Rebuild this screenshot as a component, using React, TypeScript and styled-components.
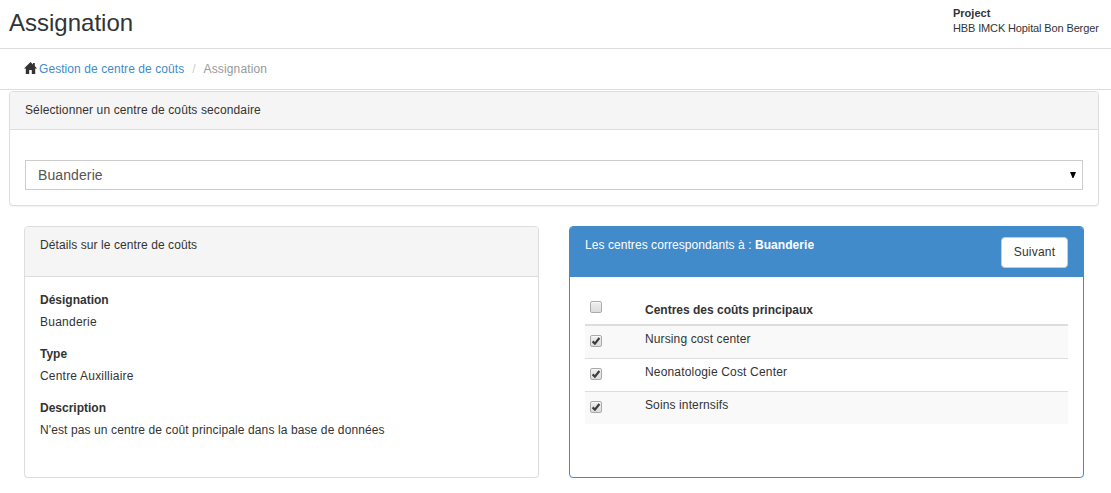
import React from "react";
import styled, { createGlobalStyle, css } from "styled-components";

const GlobalStyle = createGlobalStyle`
  *, *::before, *::after { box-sizing: border-box; }
  body {
    margin: 0;
    background: #fff;
    color: #333;
    font-family: "Liberation Sans", Arial, sans-serif;
    font-size: 12px;
    line-height: 17px;
  }
`;

const Text = styled.span<{ $spacing: number }>`
  letter-spacing: ${(p) => p.$spacing}px;
  white-space: nowrap;
`;

const Header = styled.header`
  display: flex;
  justify-content: space-between;
  height: 49px;
  padding: 0 12px 0 9px;
  border-bottom: 1px solid #ddd;
`;

const Title = styled.h1`
  margin: 0;
  padding-top: 9px;
  font-size: 24px;
  font-weight: 400;
  line-height: 27px;
`;

const Project = styled.div`
  width: 146px;
  padding-top: 6px;
  font-size: 11px;
  line-height: 15px;
  white-space: nowrap;
`;

const ProjectLabel = styled.strong`
  display: block;
`;

const Breadcrumb = styled.nav`
  display: flex;
  align-items: center;
  height: 41px;
  padding: 0 24px;
  border-bottom: 1px solid #ddd;
`;

const HomeIcon = styled.svg`
  width: 13px;
  height: 12px;
  margin: -2px 2px 0 0;
`;

const CrumbLink = styled.a`
  color: #428bca;
  letter-spacing: 0.07px;
  text-decoration: none;
`;

const Slash = styled.span`
  padding: 0 8px;
  color: #ccc;
`;

const Current = styled.span`
  color: #999;
  letter-spacing: 0.13px;
`;

const Content = styled.main`
  padding: 1px 12px 0 9px;
`;

const Panel = styled.section<{ $primary?: boolean; $height: number }>`
  height: ${(p) => p.$height}px;
  border: 1px solid ${(p) => (p.$primary ? "#428bca" : "#ddd")};
  border-radius: 4px;
  background: #fff;
  box-shadow: 0 1px 1px rgba(0, 0, 0, 0.05);
  overflow: hidden;
`;

const PanelHeading = styled.header<{ $primary?: boolean; $height: number }>`
  display: flex;
  justify-content: space-between;
  height: ${(p) => p.$height}px;
  padding: 10px 15px;
  border-bottom: 1px solid #ddd;
  background: #f5f5f5;
  ${(p) =>
    p.$primary &&
    css`
      border-color: #428bca;
      background: #428bca;
      color: #fff;
    `}
`;

const SelectBody = styled.div`
  padding: 30px 15px 15px;
`;

const SelectBox = styled.div`
  display: flex;
  align-items: center;
  justify-content: space-between;
  height: 30px;
  padding: 0 6px 0 12px;
  border: 1px solid #ccc;
  color: #555;
  font-size: 14px;
`;

const Arrow = styled.svg`
  width: 6px;
  height: 6px;
`;

const Columns = styled.div`
  display: grid;
  grid-template-columns: 515px 515px;
  gap: 30px;
  padding: 20px 15px 0;
`;

const Details = styled.dl`
  margin: 0;
  padding: 12px 15px;
`;

const Term = styled.dt`
  font-weight: 700;
  line-height: 22px;
`;

const Description = styled.dd`
  margin: 0 0 10px;
  line-height: 22px;
`;

const NextButton = styled.button`
  width: 67px;
  height: 31px;
  padding: 0;
  border: 1px solid #ccc;
  border-radius: 4px;
  background: #fff;
  color: #333;
  font: 12px/17px "Liberation Sans", Arial, sans-serif;
  letter-spacing: 0.2px;
`;

const Table = styled.div`
  padding: 15px 15px 0;
`;

const Row = styled.div<{ $striped?: boolean; $line?: boolean }>`
  display: flex;
  height: ${(p) => (p.$line ? 33 : 32)}px;
  padding: 5px 5px 0;
  background: ${(p) => (p.$striped ? "#f9f9f9" : "#fff")};
  border-top: ${(p) => (p.$line ? "1px solid #ddd" : "0")};
`;

const HeadRow = styled(Row)`
  height: 34px;
  padding-top: 10px;
  border-bottom: 2px solid #ddd;
  font-weight: 700;
`;

const CheckCell = styled.span`
  width: 55px;
`;

const Check = styled.span<{ $head?: boolean }>`
  display: flex;
  align-items: center;
  justify-content: center;
  width: 12px;
  height: 12px;
  margin-top: ${(p) => (p.$head ? -1 : 4)}px;
  border: 1px solid #aaa;
  border-radius: 2px;
  background: linear-gradient(#eee, #dcdcdc);
  box-shadow: inset 0 1px 1px rgba(255, 255, 255, 0.7);
`;

const CheckMark = () => (
  <svg width="10" height="10" viewBox="0 0 10 10">
    <path d="M1.6 5.4L3.9 7.6L8.4 2" fill="none" stroke="#3d3d3d" strokeWidth="2.2" />
  </svg>
);

const centers = [
  { name: "Nursing cost center", spacing: 0.12 },
  { name: "Neonatologie Cost Center", spacing: 0.17 },
  { name: "Soins internsifs", spacing: 0.12 },
];

const details = [
  { term: "Désignation", text: "Buanderie", spacing: 0.25 },
  { term: "Type", text: "Centre Auxilliaire", spacing: 0.2 },
  {
    term: "Description",
    text: "N'est pas un centre de coût principale dans la base de données",
    spacing: 0.11,
  },
];

export default function App() {
  return (
    <>
      <GlobalStyle />
      <Header>
        <Title>Assignation</Title>
        <Project>
          <ProjectLabel>Project</ProjectLabel>
          <Text $spacing={-0.13}>HBB IMCK Hopital Bon Berger</Text>
        </Project>
      </Header>
      <Breadcrumb>
        <HomeIcon viewBox="0 0 13 12">
          <path
            d="M6.5 0L9 2.4V1h1.8v3.1L13 6.5H11.2V12H7.8V8H5.2V12H1.8V6.5H0Z"
            fill="#333"
          />
        </HomeIcon>
        <CrumbLink>Gestion de centre de coûts</CrumbLink>
        <Slash>/</Slash>
        <Current>Assignation</Current>
      </Breadcrumb>
      <Content>
        <Panel $height={115}>
          <PanelHeading $height={38}>
            <Text $spacing={0.12}>Sélectionner un centre de coûts secondaire</Text>
          </PanelHeading>
          <SelectBody>
            <SelectBox>
              <Text $spacing={0.1}>Buanderie</Text>
              <Arrow viewBox="0 0 6 6">
                <path d="M0 0H6L3.5 6H2.5Z" fill="#000" />
              </Arrow>
            </SelectBox>
          </SelectBody>
        </Panel>
        <Columns>
          <Panel $height={252}>
            <PanelHeading $height={50}>
              <Text $spacing={0.08}>Détails sur le centre de coûts</Text>
            </PanelHeading>
            <Details>
              {details.map(({ term, text, spacing }) => (
                <React.Fragment key={term}>
                  <Term>{term}</Term>
                  <Description>
                    <Text $spacing={spacing}>{text}</Text>
                  </Description>
                </React.Fragment>
              ))}
            </Details>
          </Panel>
          <Panel $primary $height={252}>
            <PanelHeading $primary $height={50}>
              <Text $spacing={0.06}>
                Les centres correspondants à : <strong>Buanderie</strong>
              </Text>
              <NextButton>Suivant</NextButton>
            </PanelHeading>
            <Table>
              <HeadRow>
                <CheckCell>
                  <Check $head />
                </CheckCell>
                Centres des coûts principaux
              </HeadRow>
              {centers.map(({ name, spacing }, i) => (
                <Row key={name} $striped={i % 2 === 0} $line={i > 0}>
                  <CheckCell>
                    <Check>
                      <CheckMark />
                    </Check>
                  </CheckCell>
                  <Text $spacing={spacing}>{name}</Text>
                </Row>
              ))}
            </Table>
          </Panel>
        </Columns>
      </Content>
    </>
  );
}
